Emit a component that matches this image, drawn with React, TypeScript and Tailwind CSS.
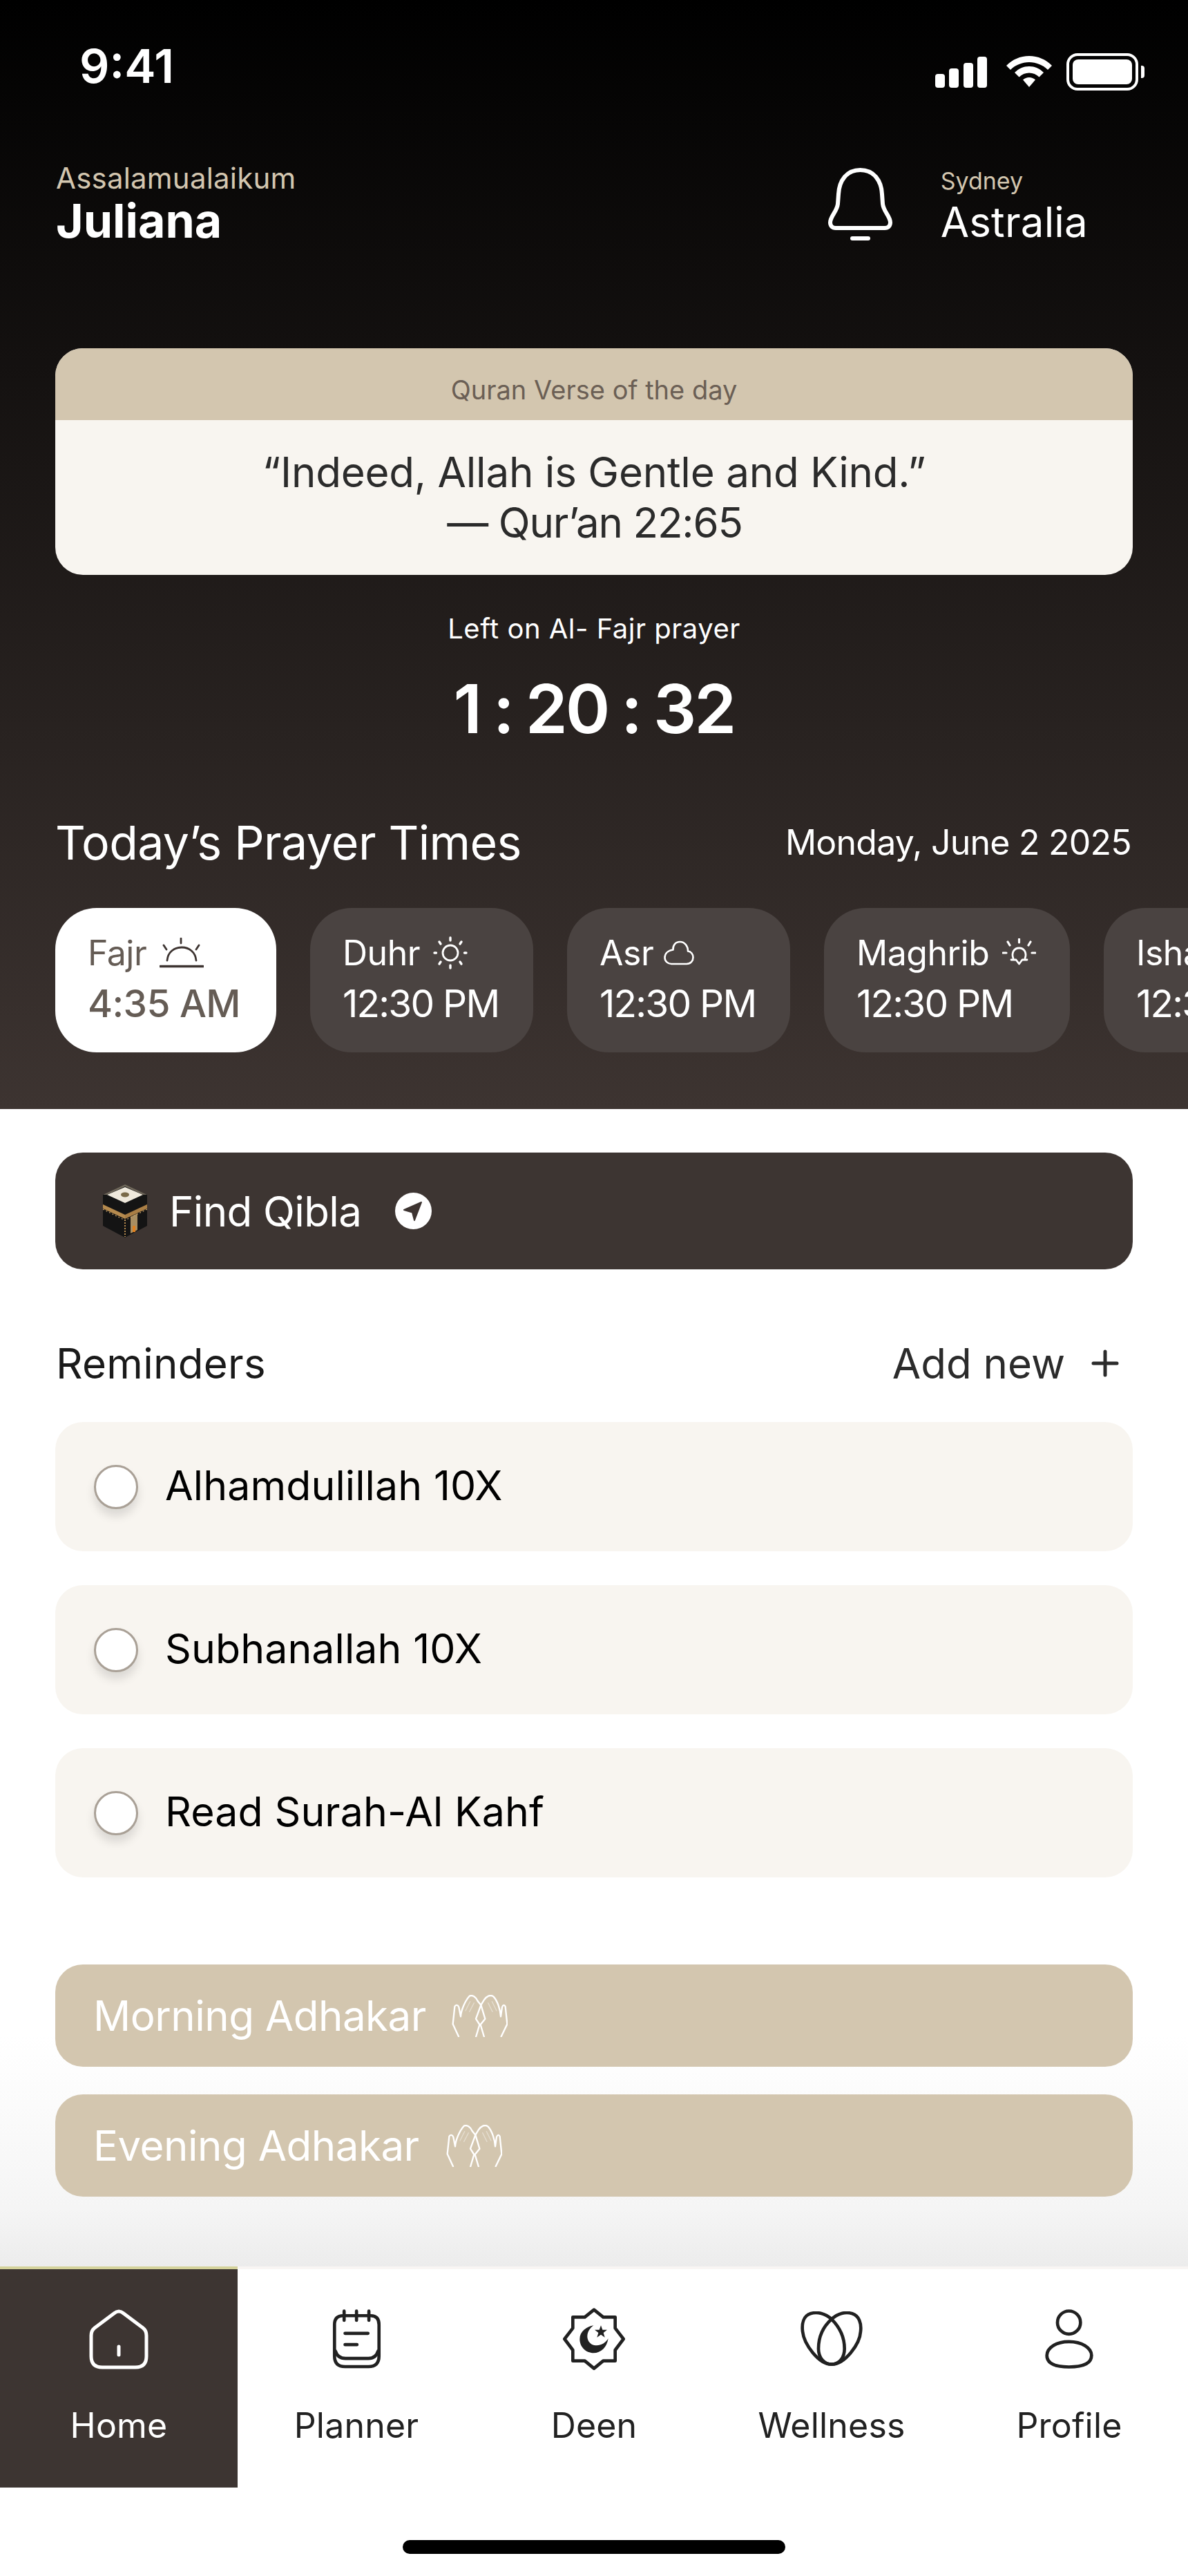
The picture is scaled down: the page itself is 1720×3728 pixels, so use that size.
import React from "react";

const Bell = () => (
  <svg width="93" height="106" viewBox="0 0 93 106" fill="none" stroke="#fff" strokeWidth="6" strokeLinejoin="round" strokeLinecap="round">
    <path d="M46.5 3C27 3 16 18 15 38L14 52C13 63 3 70 3 79C3 84 6 87 11 87H82C87 87 90 84 90 79C90 70 80 63 79 52L78 38C77 18 66 3 46.5 3Z" />
    <path d="M35 102H58" />
  </svg>
);

const FajrIcon = () => (
  <svg width="64" height="44" viewBox="0 0 64 44" fill="none" stroke="#3d3431" strokeWidth="2.8" strokeLinecap="round">
    <path d="M11 33C12 21 21 14 32 14C43 14 52 21 53 33" />
    <path d="M1 41.5H63" strokeWidth="3.6" />
    <path d="M31 1V8M6 11L10 17M57 11L53 17" />
  </svg>
);

const DuhrIcon = () => (
  <svg width="50" height="48" viewBox="0 0 50 48" fill="none" stroke="#fff" strokeWidth="2.8" strokeLinecap="round">
    <circle cx="25" cy="24" r="11" />
    <path d="M25 2V6M25 42V46M2 24H4.5M45.5 24H48M9 8L11 11M41 8L39 11M9 40L11 37M41 40L39 37" strokeWidth="3.4" />
  </svg>
);

const CloudIcon = () => (
  <svg width="44" height="36" viewBox="0 0 44 36" fill="none" stroke="#fff" strokeWidth="2.6" strokeLinecap="round" strokeLinejoin="round" className="-ml-[4px]">
    <path d="M11 34H33C39 34 42.5 29.500 42.5 24.500C42.5 20 39.500 16 35 15.500C35 8 30 2 23.500 2C17 2 13 7 13.500 13.500C6 14.500 1.5 19 1.5 25C1.5 30 6 34 11 34Z" />
  </svg>
);

const MaghribIcon = () => (
  <svg width="49" height="42" viewBox="0 0 49 42" fill="none" stroke="#fff" strokeWidth="2.8" strokeLinecap="round" strokeLinejoin="round">
    <path d="M16 29C13 21 17 14 24.5 14C32 14 36 21 33 29" />
    <path d="M24.5 1V6M8 5L11 10M41 5L38 10M1 21H6M43 21H48" strokeWidth="3.2" />
    <path d="M13 31L20 31L24.5 37L29 31L36 31" />
  </svg>
);

const Kaaba = () => (
  <svg width="64" height="77" viewBox="0 0 64 77">
    <polygon points="32,0 64,15 64,60 32,77 0,60 0,15" fill="#141414" />
    <polygon points="32,4 58,15 32,27 6,15" fill="#efe9dc" />
    <polygon points="32,0 64,15 58,15 32,3 6,15 0,15" fill="#6f675a" />
    <ellipse cx="32" cy="15" rx="6" ry="3.400" fill="#7a6a48" />
    <polygon points="0,29 32,44 32,50 0,35" fill="#b58a4e" />
    <polygon points="64,29 32,44 32,50 64,35" fill="#a97e45" />
    <polygon points="40,47 50,42 50,66 40,71" fill="#a98f62" />
    <path d="M32 51V76" stroke="#b58a4e" strokeWidth="2" strokeDasharray="2 2" />
    <path d="M0 36L32 52M64 36L32 52" stroke="#c9a56d" strokeWidth="1.200" strokeDasharray="2 3" />
    <path d="M45 60V69" stroke="#e0801f" strokeWidth="4" />
  </svg>
);

const Hands = () => (
  <svg width="81" height="61" viewBox="45 51 243 183" fill="none" stroke="#fff" strokeWidth="7" strokeLinecap="round" strokeLinejoin="round">
    <path d="M75 232L50 178L58 102C62 92 72 94 76 104L84 145C86 118 102 78 122 56C135 50 150 60 158 78L172 95L150 155L166 180L150 234" />
    <path d="M186 234L170 180L190 155L172 95L186 72C196 58 212 48 226 58C244 76 256 116 258 145L264 104C268 94 274 92 278 102L286 178L260 232" />
    <path d="M105 120L125 80M122 124L142 86M240 120L220 80M222 124L203 86" strokeOpacity="0.4" strokeWidth="4" />
  </svg>
);

const HomeIcon = () => (
  <svg width="86" height="87" viewBox="0 0 86 87" fill="none" stroke="#fff" strokeWidth="5" strokeLinecap="round" strokeLinejoin="round">
    <path d="M36 6Q43 0 50 6L78 27Q83 31 83 38V68Q83 84 67 84H19Q3 84 3 68V38Q3 31 8 27Z" />
    <path d="M43 54V66" />
  </svg>
);

const PlannerIcon = () => (
  <svg width="72" height="88" viewBox="120 65 215 265" fill="none" stroke="#212121" strokeWidth="14" strokeLinecap="round" strokeLinejoin="round">
    <path d="M132 250V135Q132 96 170 96H290Q326 96 326 135V272Q326 318 280 318H178Q132 318 132 272Z" />
    <path d="M136 250Q146 282 180 282H280Q312 282 322 250" />
    <path d="M174 76V116M228 76V116M282 76V116" />
    <path d="M178 173H278M178 222H230" />
  </svg>
);

const DeenIcon = () => (
  <svg width="90" height="90" viewBox="1125 62 270 270" fill="none" stroke="#212121" strokeWidth="14" strokeLinejoin="round">
    <path d="M1260 70L1300 102H1352V150L1388 197L1352 245V292H1300L1260 325L1220 292H1168V245L1132 197L1168 150V102H1220Z" />
    <path fill="#212121" stroke="none" d="M1258 138C1225 145 1198 165 1198 198C1198 232 1225 258 1258 258C1290 258 1315 235 1322 195C1305 222 1275 232 1250 220C1225 205 1222 165 1258 138Z" />
    <polygon fill="#212121" stroke="none" points="1290,138 1297,157 1317,157 1301,170 1307,190 1290,178 1273,190 1279,170 1263,157 1283,157" />
  </svg>
);

const WellnessIcon = () => (
  <svg width="90" height="80" viewBox="88 78 268 240" fill="none" stroke="#212121" strokeWidth="14" strokeLinejoin="round">
    <path d="M222 112C195 88 160 78 130 88C100 98 92 130 96 165C102 220 165 308 222 308C280 308 345 220 348 165C352 130 342 98 312 88C282 78 248 88 222 112Z" />
    <path d="M222 112C185 145 165 190 165 240C165 280 190 308 222 308C255 308 278 280 278 240C278 190 255 145 222 112Z" />
  </svg>
);

const ProfileIcon = () => (
  <svg width="70" height="87" viewBox="1150 68 210 260" fill="none" stroke="#212121" strokeWidth="14">
    <circle cx="1254" cy="125" r="50" />
    <path d="M1254 208C1310 208 1352 235 1352 268C1352 305 1310 318 1254 318C1198 318 1158 305 1158 268C1158 235 1198 208 1254 208Z" />
  </svg>
);

const chipBase = "shrink-0 h-[209px] rounded-[60px] pl-[47px] pt-[34px] bg-[#4a4341] text-white";

function Chip({ label, time, icon, w, active }: { label: string; time: string; icon: React.ReactNode; w: string; active?: boolean }) {
  return (
    <div className={`${chipBase} ${w} ${active ? "!bg-white !text-[#655c55]" : ""}`}>
      <div className="flex items-center h-[62px] gap-[19px] text-[50px] leading-[62px] tracking-[-0.5px]">
        <span>{label}</span>
        {icon}
      </div>
      <div className={`mt-[8px] text-[55px] leading-[68px] whitespace-nowrap ${active ? "font-medium tracking-[-0.6px]" : "tracking-[-1.8px]"}`}>{time}</div>
    </div>
  );
}

function Reminder({ text }: { text: string }) {
  return (
    <div className="h-[187px] rounded-[40px] bg-[#f8f5f0] flex items-center pl-[56px]">
      <span className="w-[64px] h-[64px] rounded-full bg-white border-[3px] border-[#a9a096] shadow-[0_10px_14px_rgba(0,0,0,0.12)]" />
      <span className="ml-[39px] pb-[4px] text-[59px] leading-[70px] tracking-[0.1px] text-black">{text}</span>
    </div>
  );
}

function Adhkar({ text, gap }: { text: string; gap: string }) {
  return (
    <div className="h-[148px] rounded-[40px] bg-[#d3c6af] flex items-center pl-[55px] text-white">
      <span className="text-[60px] leading-[72px] tracking-[-0.5px]">{text}</span>
      <span className={gap}><Hands /></span>
    </div>
  );
}

function NavItem({ label, icon, active }: { label: string; icon: React.ReactNode; active?: boolean }) {
  return (
    <div className={`h-[320px] flex flex-col items-center border-t-[4px] ${active ? "bg-[#3d3532] border-[#d4d29b] text-white" : "border-[#f8f5f3] text-[#212121]"}`}>
      <div className="h-[88px] mt-[57px] flex items-center justify-center">{icon}</div>
      <div className="mt-[52px] text-[50px] leading-[58px] tracking-[0.2px]">{label}</div>
    </div>
  );
}

export default function App() {
  return (
    <div className="w-[1720px] h-[3728px] flex flex-col overflow-hidden bg-white font-['Inter',sans-serif]">
      <div className="h-[1605px] shrink-0 bg-[linear-gradient(to_bottom,#000000,#3d3431)] flex flex-col">
        {/* status bar */}
        <div className="h-[150px] flex justify-between pl-[115px] pr-[63px] text-white">
          <span className="mt-[55px] text-[68px] leading-[80px] font-semibold">9:41</span>
          <div className="mt-[77px] h-[54px] flex items-center gap-[28px]">
            <svg width="76" height="46" viewBox="0 0 76 46" fill="#fff" className="mt-[2px]">
              <rect x="0" y="25" width="14" height="20" rx="4" />
              <rect x="20" y="17" width="14" height="28" rx="4" />
              <rect x="41" y="9" width="14" height="36" rx="4" />
              <rect x="61" y="0" width="14" height="45" rx="4" />
            </svg>
            <svg width="66" height="46" viewBox="0 0 66 46" fill="#fff" className="-ml-[1px]">
              <path d="M33 0C46 0 57 5 66 14L60 20C53 13 43 9 33 9C23 9 13 13 6 20L0 14C9 5 20 0 33 0Z" />
              <path d="M33 15C41 15 48 18 54 24L47.5 30.5C43.5 26.5 38.5 24.5 33 24.5C27.5 24.5 22.500 26.500 18.500 30.500L12 24C18 18 25 15 33 15Z" />
              <path d="M33 31C36.500 31 39.500 32.500 42 34.500L33 45L24 34.500C26.500 32.500 29.500 31 33 31Z" />
            </svg>
            <div className="flex items-center -ml-[7px]">
              <div className="w-[104px] h-[54px] rounded-[16px] border-[4px] border-white p-[5px]">
                <div className="w-full h-full rounded-[8px] bg-white" />
              </div>
              <div className="ml-[4px] w-[5px] h-[18px] rounded-r-[4px] bg-white" />
            </div>
          </div>
        </div>

        {/* greeting */}
        <div className="mt-[84px] h-[120px] flex justify-between pl-[81px] pr-[145px]">
          <div>
            <div className="text-[42px] leading-[48px] tracking-[0.2px] text-[#d3c6af]">Assalamualaikum</div>
            <div className="-mt-[3px] text-[68px] leading-[80px] font-bold text-white">Juliana</div>
          </div>
          <div className="flex">
            <div className="mt-[9px]"><Bell /></div>
            <div className="ml-[70px] mt-[8px]">
              <div className="text-[34px] leading-[40px] text-[#d3c6af]">Sydney</div>
              <div className="mt-[4px] text-[60px] leading-[70px] tracking-[0.2px] text-white">Astralia</div>
            </div>
          </div>
        </div>

        {/* verse card */}
        <div className="mt-[150px] mx-[80px] h-[328px] rounded-[40px] overflow-hidden bg-[#f8f5f0] shrink-0">
          <div className="h-[104px] bg-[#d3c6af] flex items-center justify-center pt-[16px] text-[38px] leading-[46px] text-[#6b5f55]">Quran Verse of the day</div>
          <div className="pt-[39px] text-center text-[60px] leading-[73px] text-[#2b2b2b]">
            <div className="tracking-[-0.2px]">“Indeed, Allah is Gentle and Kind.”</div>
            <div className="tracking-[-1.2px] pl-[2px]">— Qur’an 22:65</div>
          </div>
        </div>

        {/* countdown */}
        <div className="mt-[54px] text-center text-[40px] leading-[48px] tracking-[0.5px] text-white">Left on Al- Fajr prayer</div>
        <div className="mt-[32px] text-center text-[98px] leading-[120px] font-semibold tracking-[-3px] [word-spacing:-3px] text-white">1 : 20 : 32</div>

        {/* prayer times */}
        <div className="mt-[93px] flex items-center justify-between pl-[80px] pr-[82px] text-white h-[80px]">
          <span className="text-[68px] leading-[80px] tracking-[-0.6px]">Today’s Prayer Times</span>
          <span className="text-[50px] leading-[60px] tracking-[-0.75px]">Monday, June 2 2025</span>
        </div>
        <div className="mt-[55px] flex gap-[49px] pl-[80px] overflow-hidden">
          <Chip active label="Fajr" time="4:35 AM" icon={<FajrIcon />} w="w-[320px]" />
          <Chip label="Duhr" time="12:30 PM" icon={<DuhrIcon />} w="w-[323px]" />
          <Chip label="Asr" time="12:30 PM" icon={<CloudIcon />} w="w-[323px]" />
          <Chip label="Maghrib" time="12:30 PM" icon={<MaghribIcon />} w="w-[356px]" />
          <Chip label="Isha" time="12:30 PM" icon={null} w="w-[323px]" />
        </div>
      </div>

      {/* content */}
      <div className="h-[1675px] shrink-0 px-[80px] bg-[linear-gradient(to_bottom,#ffffff_80%,#f5f5f5_95%,#ececec_100%)]">
        <div className="mt-[63px] h-[169px] rounded-[40px] bg-[#3d3532] flex items-center pl-[69px] text-white">
          <Kaaba />
          <span className="ml-[32px] text-[60px] leading-[72px] tracking-[-0.6px]">Find Qibla</span>
          <svg width="53" height="53" viewBox="0 0 53 53" className="ml-[49px]">
            <circle cx="26.500" cy="26.500" r="26.500" fill="#fff" />
            <path d="M38 14L13 25L25 28.500L28 40Z" fill="#3d3431" stroke="#3d3431" strokeWidth="2" strokeLinejoin="round" />
          </svg>
        </div>

        <div className="mt-[101px] h-[70px] flex items-center justify-between">
          <span className="text-[60px] leading-[70px] tracking-[0.3px] text-[#1a1a1a] ml-[1px]">Reminders</span>
          <span className="flex items-center text-[60px] leading-[70px] text-[#2b2b2b]">
            Add new
            <svg width="40" height="40" viewBox="0 0 40 40" stroke="#2b2b2b" strokeWidth="5" strokeLinecap="round" className="ml-[38px] mr-[20px]">
              <path d="M20 3V37M3 20H37" />
            </svg>
          </span>
        </div>

        <div className="mt-[50px] flex flex-col gap-[49px]">
          <Reminder text="Alhamdulillah 10X" />
          <Reminder text="Subhanallah 10X" />
          <Reminder text="Read Surah-Al Kahf" />
        </div>

        <div className="mt-[126px] flex flex-col gap-[40px]">
          <Adhkar text="Morning Adhakar" gap="ml-[37px]" />
          <Adhkar text="Evening Adhakar" gap="ml-[39px]" />
        </div>
      </div>

      {/* nav */}
      <div className="grid grid-cols-5 shrink-0 bg-white">
        <NavItem active label="Home" icon={<HomeIcon />} />
        <NavItem label="Planner" icon={<PlannerIcon />} />
        <NavItem label="Deen" icon={<DeenIcon />} />
        <NavItem label="Wellness" icon={<WellnessIcon />} />
        <NavItem label="Profile" icon={<ProfileIcon />} />
      </div>
      <div className="flex-1 flex justify-center pt-[76px] bg-white">
        <div className="w-[554px] h-[20px] rounded-full bg-black" />
      </div>
    </div>
  );
}
